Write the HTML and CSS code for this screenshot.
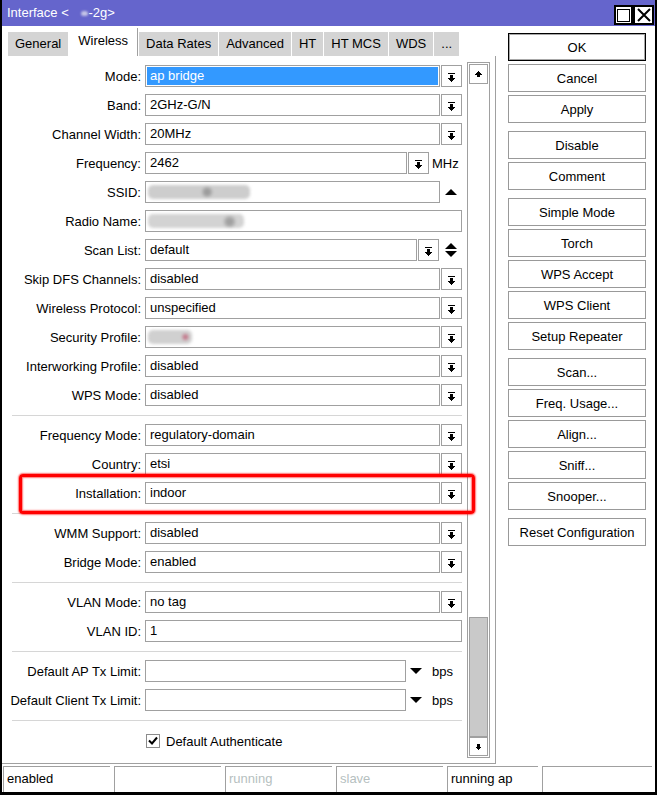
FILE: index.html
```html
<!DOCTYPE html>
<html lang="en">
    <head>
        <title>Interface - Wireless</title>
        <link rel="stylesheet" href="styles.css">
    </head>
    <body>
        <svg class="defs" width="0" height="0">
            <symbol id="i-drop" viewBox="0 0 7 9"><rect x="0" y="0" width="7" height="1"/><rect x="2" y="2" width="3" height="3"/><polygon points="0,5 7,5 4,9 3,9"/></symbol>
            <symbol id="i-up" viewBox="0 0 7 6"><polygon points="3,0 4,0 7,3.5 0,3.5"/><rect x="2" y="3.5" width="3" height="2.5"/></symbol>
            <symbol id="i-down" viewBox="0 0 7 6"><rect x="2" y="0" width="3" height="2.5"/><polygon points="0,2.5 7,2.5 4,6 3,6"/></symbol>
        </svg>

        <div class="window">
            <div class="titlebar">
                <span class="title">Interface &lt; <span class="blot"></span>-2g&gt;</span>
                <span class="win-btn win-max"><svg width="13" height="13" viewBox="0 0 13 13"><rect x="0.5" y="0.5" width="12" height="12" fill="none" stroke="#000"/></svg></span>
                <span class="win-btn win-close"><svg width="14" height="14" viewBox="0 0 14 14"><path d="M1 1 L13 13 M13 1 L1 13" stroke="#000" stroke-width="2"/></svg></span>
            </div>

            <div class="main">
                <div class="left">
                    <div class="tabs">
                        <span class="tab">General</span>
                        <span class="tab active">Wireless</span>
                        <span class="tab">Data Rates</span>
                        <span class="tab">Advanced</span>
                        <span class="tab">HT</span>
                        <span class="tab">HT MCS</span>
                        <span class="tab">WDS</span>
                        <span class="tab">...</span>
                    </div>

                    <div class="panel">
                        <div class="form">
                            <div class="group">
                                <div class="row">
                                    <span class="label">Mode:</span>
                                    <div class="field"><span class="selected">ap bridge</span></div>
                                    <span class="drop"><svg><use href="#i-drop"/></svg></span>
                                </div>
                                <div class="row">
                                    <span class="label">Band:</span>
                                    <div class="field">2GHz-G/N</div>
                                    <span class="drop"><svg><use href="#i-drop"/></svg></span>
                                </div>
                                <div class="row">
                                    <span class="label">Channel Width:</span>
                                    <div class="field">20MHz</div>
                                    <span class="drop"><svg><use href="#i-drop"/></svg></span>
                                </div>
                                <div class="row">
                                    <span class="label">Frequency:</span>
                                    <div class="field">2462</div>
                                    <span class="drop"><svg><use href="#i-drop"/></svg></span>
                                    <span class="unit">MHz</span>
                                </div>
                                <div class="row">
                                    <span class="label">SSID:</span>
                                    <div class="field"><span class="smudge smudge-ssid"></span></div>
                                    <span class="slot"><span class="tri tri-up"></span></span>
                                </div>
                                <div class="row">
                                    <span class="label">Radio Name:</span>
                                    <div class="field"><span class="smudge smudge-radio"></span></div>
                                </div>
                                <div class="row">
                                    <span class="label">Scan List:</span>
                                    <div class="field">default</div>
                                    <span class="drop"><svg><use href="#i-drop"/></svg></span>
                                    <span class="slot slot-wide"><span class="updown"><span class="tri tri-up"></span><span class="tri tri-down"></span></span></span>
                                </div>
                                <div class="row">
                                    <span class="label">Skip DFS Channels:</span>
                                    <div class="field">disabled</div>
                                    <span class="drop"><svg><use href="#i-drop"/></svg></span>
                                </div>
                                <div class="row">
                                    <span class="label">Wireless Protocol:</span>
                                    <div class="field">unspecified</div>
                                    <span class="drop"><svg><use href="#i-drop"/></svg></span>
                                </div>
                                <div class="row">
                                    <span class="label">Security Profile:</span>
                                    <div class="field"><span class="smudge smudge-profile"></span></div>
                                    <span class="drop"><svg><use href="#i-drop"/></svg></span>
                                </div>
                                <div class="row">
                                    <span class="label">Interworking Profile:</span>
                                    <div class="field">disabled</div>
                                    <span class="drop"><svg><use href="#i-drop"/></svg></span>
                                </div>
                                <div class="row">
                                    <span class="label">WPS Mode:</span>
                                    <div class="field">disabled</div>
                                    <span class="drop"><svg><use href="#i-drop"/></svg></span>
                                </div>
                            </div>

                            <div class="sep"></div>

                            <div class="group">
                                <div class="row">
                                    <span class="label">Frequency Mode:</span>
                                    <div class="field">regulatory-domain</div>
                                    <span class="drop"><svg><use href="#i-drop"/></svg></span>
                                </div>
                                <div class="row">
                                    <span class="label">Country:</span>
                                    <div class="field">etsi</div>
                                    <span class="drop"><svg><use href="#i-drop"/></svg></span>
                                </div>
                                <div class="row">
                                    <span class="label">Installation:</span>
                                    <div class="field">indoor</div>
                                    <span class="drop"><svg><use href="#i-drop"/></svg></span>
                                </div>
                            </div>

                            <div class="sep"></div>

                            <div class="group">
                                <div class="row">
                                    <span class="label">WMM Support:</span>
                                    <div class="field">disabled</div>
                                    <span class="drop"><svg><use href="#i-drop"/></svg></span>
                                </div>
                                <div class="row">
                                    <span class="label">Bridge Mode:</span>
                                    <div class="field">enabled</div>
                                    <span class="drop"><svg><use href="#i-drop"/></svg></span>
                                </div>
                            </div>

                            <div class="sep"></div>

                            <div class="group">
                                <div class="row">
                                    <span class="label">VLAN Mode:</span>
                                    <div class="field">no tag</div>
                                    <span class="drop"><svg><use href="#i-drop"/></svg></span>
                                </div>
                                <div class="row">
                                    <span class="label">VLAN ID:</span>
                                    <div class="field">1</div>
                                </div>
                            </div>

                            <div class="sep"></div>

                            <div class="group">
                                <div class="row">
                                    <span class="label">Default AP Tx Limit:</span>
                                    <div class="field"></div>
                                    <span class="slot slot-wide"><span class="tri tri-down tri-big"></span></span>
                                    <span class="unit">bps</span>
                                </div>
                                <div class="row">
                                    <span class="label">Default Client Tx Limit:</span>
                                    <div class="field"></div>
                                    <span class="slot slot-wide"><span class="tri tri-down tri-big"></span></span>
                                    <span class="unit">bps</span>
                                </div>
                            </div>

                            <div class="sep"></div>

                            <div class="row check-row">
                                <span class="checkbox"><svg width="12" height="12" viewBox="0 0 12 12"><path d="M2 5.5 L5 8.5 L10 2.5" fill="none" stroke="#000" stroke-width="2"/></svg></span>
                                <span>Default Authenticate</span>
                            </div>
                        </div>

                        <div class="scrollbar">
                            <span class="sb-btn"><svg width="7" height="6"><use href="#i-up"/></svg></span>
                            <span class="sb-track"></span>
                            <span class="sb-thumb"></span>
                            <span class="sb-btn sb-btn-down"><svg width="7" height="6"><use href="#i-down"/></svg></span>
                        </div>
                    </div>
                </div>

                <div class="actions">
                    <div class="btn-group">
                        <span class="btn default">OK</span>
                        <span class="btn">Cancel</span>
                        <span class="btn">Apply</span>
                    </div>
                    <div class="btn-group">
                        <span class="btn">Disable</span>
                        <span class="btn">Comment</span>
                    </div>
                    <div class="btn-group">
                        <span class="btn">Simple Mode</span>
                        <span class="btn">Torch</span>
                        <span class="btn">WPS Accept</span>
                        <span class="btn">WPS Client</span>
                        <span class="btn">Setup Repeater</span>
                    </div>
                    <div class="btn-group">
                        <span class="btn">Scan...</span>
                        <span class="btn">Freq. Usage...</span>
                        <span class="btn">Align...</span>
                        <span class="btn">Sniff...</span>
                        <span class="btn">Snooper...</span>
                    </div>
                    <div class="btn-group">
                        <span class="btn">Reset Configuration</span>
                    </div>
                </div>
            </div>

            <div class="status">
                <span class="cell">enabled</span>
                <span class="cell"></span>
                <span class="cell dim">running</span>
                <span class="cell dim">slave</span>
                <span class="cell narrow">running ap</span>
                <span class="cell wide"></span>
            </div>

            <!-- marker drawn around the Installation row -->
            <div class="marker"></div>
        </div>
    </body>
</html>
```

FILE: styles.css
```css
* {
    box-sizing: border-box;
}
body {
    margin: 0;
    background: #fff;
    font-family: "Liberation Sans", Arial, sans-serif;
    font-size: 13px;
    color: #000;
}
.defs {
    position: absolute;
}
svg {
    fill: #000;
    shape-rendering: crispEdges;
}

/* window frame */
.window {
    position: relative;
    width: 657px;
    height: 795px;
    border: 2px solid #000;
    border-top: 0;
    border-bottom-width: 3px;
    display: flex;
    flex-direction: column;
    background: #fff;
}
.titlebar {
    height: 26px;
    flex: none;
    background: #6565cc;
    color: #fff;
    display: flex;
    align-items: flex-start;
    padding-left: 5px;
}
.title {
    flex: 1;
    padding-top: 5px;
}
.blot {
    display: inline-block;
    width: 7px;
    height: 5px;
    margin: 0 0 1px 9px;
    border-radius: 3px;
    background: #c4c4e6;
    filter: blur(0.8px);
}
.win-btn {
    margin-top: 5px;
    height: 20px;
    background: #fff;
    border: 2px solid #000;
    display: flex;
    align-items: center;
    justify-content: center;
}
.win-max {
    width: 19px;
}
.win-close {
    width: 21px;
    margin-right: 1px;
}
.win-close svg {
    shape-rendering: auto;
}

.main {
    flex: 1;
    display: flex;
    min-height: 0;
}
.left {
    width: 494px;
    display: flex;
    flex-direction: column;
}

/* tabs */
.tabs {
    display: flex;
    align-items: flex-end;
    gap: 1px;
    height: 28px;
    margin-top: 2px;
    padding-left: 6px;
}
.tab {
    height: 24px;
    line-height: 24px;
    padding: 0 7px;
    background: #d4d4d4;
    white-space: nowrap;
}
.tab.active {
    height: 28px;
    line-height: 26px;
    padding: 0 9px;
    background: #fff;
    border-right: 1px solid #a0a0a0;
}

/* form panel */
.panel {
    flex: 1;
    display: flex;
    border-right: 1px solid #a0a0a0;
    border-bottom: 1px solid #a0a0a0;
}
.form {
    flex: 1;
    padding: 9px 4px 0 0;
}
.group {
    display: flex;
    flex-direction: column;
    gap: 7px;
}
.sep {
    height: 1px;
    background: #d6d6d6;
    margin: 9px 0 8px 10px;
}
.row {
    display: flex;
    align-items: center;
    height: 22px;
}
.label {
    width: 139px;
    margin-right: 4px;
    text-align: right;
    white-space: nowrap;
}
.field {
    flex: 1;
    height: 22px;
    border: 1px solid #a0a0a0;
    padding: 0 4px;
    line-height: 20px;
    white-space: nowrap;
    overflow: hidden;
}
.selected {
    display: block;
    margin: 1px -3px;
    padding-left: 3px;
    line-height: 18px;
    background: #3399ff;
    color: #fff;
}
.drop {
    width: 21px;
    height: 22px;
    margin-left: 1px;
    border: 1px solid #a0a0a0;
    display: flex;
    align-items: center;
    justify-content: center;
}
.drop svg {
    width: 7px;
    height: 9px;
    margin-top: 2px;
}
.slot {
    width: 22px;
    display: flex;
    align-items: center;
    justify-content: center;
}
.slot-wide {
    width: 23px;
}
.unit {
    width: 33px;
    padding-left: 3px;
}
.tri {
    width: 0;
    height: 0;
    border-left: 6px solid transparent;
    border-right: 6px solid transparent;
}
.tri-up {
    border-bottom: 6px solid #000;
}
.tri-down {
    border-top: 6px solid #000;
}
.tri-big {
    border-left-width: 6.5px;
    border-right-width: 6.5px;
    margin-right: 4px;
}
.updown {
    display: flex;
    flex-direction: column;
    gap: 2px;
}

/* redacted values */
.smudge {
    display: inline-block;
    height: 14px;
    margin: 3px 0 0 -2px;
    border-radius: 5px;
    filter: blur(1.6px);
}
.smudge-ssid {
    width: 102px;
    background: radial-gradient(circle at 58% 50%, #9c9c9c 0 3px, transparent 6px), #cdcdcd;
}
.smudge-radio {
    width: 96px;
    background: radial-gradient(circle at 85% 55%, #a0a0a0 0 3px, transparent 7px), #d3d3d3;
}
.smudge-profile {
    width: 44px;
    background: radial-gradient(circle at 85% 50%, #c47a8c 0 2px, transparent 4px), #d0d0d0;
}

.check-row {
    margin-top: 9px;
    padding-left: 144px;
    gap: 6px;
}
.checkbox {
    width: 14px;
    height: 14px;
    border: 1px solid #8c8c8c;
    display: flex;
    align-items: center;
    justify-content: center;
}
.checkbox svg {
    shape-rendering: auto;
}

/* scrollbar */
.scrollbar {
    width: 23px;
    margin: 6px 5px 5px 1px;
    border: 1px solid #a0a0a0;
    padding: 1px;
    display: flex;
    flex-direction: column;
}
.sb-btn {
    height: 20px;
    border: 1px solid #a0a0a0;
    display: flex;
    align-items: center;
    justify-content: center;
}
.sb-btn-down {
    height: 19px;
}
.sb-track {
    flex: 1;
}
.sb-thumb {
    height: 120px;
    background: #c9c9c9;
    border: 1px solid #a0a0a0;
}

/* button column */
.actions {
    width: 138px;
    margin-left: 12px;
    padding-top: 7px;
    display: flex;
    flex-direction: column;
    gap: 8px;
}
.btn-group {
    display: flex;
    flex-direction: column;
    gap: 3px;
}
.btn {
    height: 28px;
    border: 1px solid #999;
    display: flex;
    align-items: center;
    justify-content: center;
    white-space: nowrap;
}
.btn.default {
    border-color: #000;
    box-shadow: inset 0 0 0 1px #a8a8a8;
}

/* status bar */
.status {
    height: 28px;
    flex: none;
    padding: 2px 3px 0 1px;
    display: flex;
    gap: 4px;
}
.cell {
    width: 107px;
    border-top: 1px solid #a0a0a0;
    border-left: 1px solid #a0a0a0;
    padding-left: 3px;
    line-height: 23px;
    white-space: nowrap;
}
.cell.dim {
    color: #b6bfbf;
}
.cell.narrow {
    width: 91px;
}
.cell.wide {
    flex: 1;
}

.marker {
    position: absolute;
    left: 17px;
    top: 474px;
    width: 456px;
    height: 40px;
    border: 3px solid #ff0000;
    border-radius: 4px;
    box-shadow: 0 0 1.5px 1px rgba(255, 0, 0, 0.55), inset 0 0 1.5px 1px rgba(255, 0, 0, 0.55);
}
```
